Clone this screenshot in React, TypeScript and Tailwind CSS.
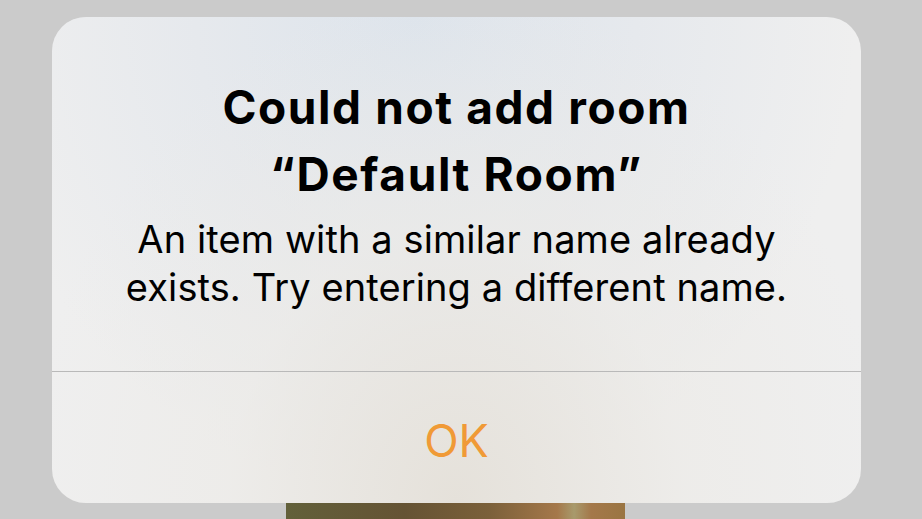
export default function App() {
  return (
    <div className="w-[922px] h-[519px] overflow-hidden bg-[#cbcbcb] relative" style={{ fontFamily: 'Inter, "Noto Sans", sans-serif' }}>
      {/* photo peeking under the alert */}
      <div className="absolute left-[286px] top-[500px] w-[339px] h-[30px] bg-[linear-gradient(90deg,#62603a_0%,#655334_35%,#7b603a_60%,#a5784a_80%,#a89a6c_85%,#a4784a_90%,#9a7542_100%)]" />
      <div className="relative mt-[17px] ml-[52px] w-[809px] h-[486px] rounded-[34px] overflow-hidden bg-[#efefef] flex flex-col">
        <div className="absolute inset-0 bg-[radial-gradient(ellipse_at_45%_0%,#dde4ec_0%,#e6e9ed_35%,rgba(240,240,240,0)_70%)]" />
        <div className="absolute inset-0 bg-[radial-gradient(ellipse_at_50%_100%,#e5e1da_0%,rgba(236,234,230,0.6)_40%,rgba(240,240,240,0)_75%)]" />
        <div className="relative flex flex-col items-center text-center h-[354px] pt-[57px]">
          <h1 className="text-[46px] leading-[67px] font-bold text-black tracking-[1.6px]">
            Could not add room
            <br />
            “Default Room”
          </h1>
          <p className="mt-[7px] text-[38px] leading-[48px] text-black tracking-[0.1px]">
            An item with a similar name already
            <br />
            exists. Try entering a different name.
          </p>
        </div>
        <div className="relative h-px bg-[#b9b9b9]" />
        <div className="relative flex-1 flex justify-center pt-[42px]">
          <span className="text-[45px] leading-[53px] text-[#f09a36] h-[53px]">OK</span>
        </div>
      </div>
    </div>
  );
}
